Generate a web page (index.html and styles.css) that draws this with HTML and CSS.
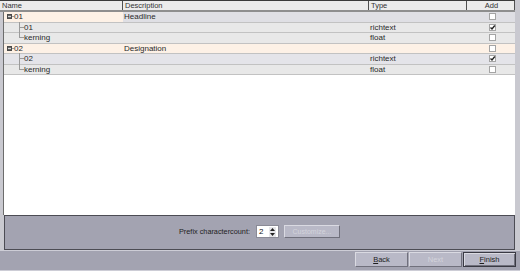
FILE: index.html
```html
<!DOCTYPE html>
<html lang="en">
<head>
    <meta charset="UTF-8">
    <title>Export fields</title>
    <link rel="stylesheet" href="styles.css">
</head>
<body>

<div class="window">
    <div class="content">
        <div class="grid-head">
            <div class="hcell">Name</div>
            <div class="hcell">Description</div>
            <div class="hcell">Type</div>
            <div class="hcell center">Add</div>
        </div>

        <div class="grid-body">
            <div class="row row-parent">
                <div class="cell name hot"><span class="expander"></span><span class="stub"></span>01</div>
                <div class="cell">Headline</div>
                <div class="cell"></div>
                <div class="cell center"><span class="check"></span></div>
            </div>
            <div class="row">
                <div class="cell name"><span class="branch"><span class="top"></span><span class="bottom"></span></span>01</div>
                <div class="cell"></div>
                <div class="cell">richtext</div>
                <div class="cell center"><span class="check checked"><svg width="7" height="7" viewBox="0 0 7 7"><polyline points="1.5,3.5 3,5 5.8,1.5" fill="none" stroke="#222" stroke-width="1.4"/></svg></span></div>
            </div>
            <div class="row">
                <div class="cell name"><span class="branch last"><span class="top"></span><span class="bottom"></span></span>kerning</div>
                <div class="cell"></div>
                <div class="cell">float</div>
                <div class="cell center"><span class="check"></span></div>
            </div>
            <div class="row row-hot">
                <div class="cell name"><span class="expander"></span><span class="stub"></span>02</div>
                <div class="cell">Designation</div>
                <div class="cell"></div>
                <div class="cell center"><span class="check"></span></div>
            </div>
            <div class="row row-alt">
                <div class="cell name"><span class="branch"><span class="top"></span><span class="bottom"></span></span>02</div>
                <div class="cell"></div>
                <div class="cell">richtext</div>
                <div class="cell center"><span class="check checked"><svg width="7" height="7" viewBox="0 0 7 7"><polyline points="1.5,3.5 3,5 5.8,1.5" fill="none" stroke="#222" stroke-width="1.4"/></svg></span></div>
            </div>
            <div class="row">
                <div class="cell name"><span class="branch last"><span class="top"></span><span class="bottom"></span></span>kerning</div>
                <div class="cell"></div>
                <div class="cell">float</div>
                <div class="cell center"><span class="check"></span></div>
            </div>
        </div>

        <div class="options">
            <span class="label">Prefix charactercount:</span>
            <div class="spinner">
                <span class="value">2</span>
                <span class="arrows">
                    <svg width="5" height="3" viewBox="0 0 5 3"><polygon points="0,3 2.5,0 5,3" fill="#222"/></svg>
                    <svg width="5" height="3" viewBox="0 0 5 3"><polygon points="0,0 5,0 2.5,3" fill="#222"/></svg>
                </span>
            </div>
            <button class="btn small" disabled>Customize...</button>
        </div>
    </div>

    <div class="button-bar">
        <button class="btn"><u>B</u>ack</button>
        <button class="btn" disabled>Next</button>
        <button class="btn default"><u>F</u>inish</button>
    </div>
</div>

</body>
</html>
```

FILE: styles.css
```css
* {
    margin: 0;
    padding: 0;
    box-sizing: border-box;
    font-family: "Liberation Sans", Arial, sans-serif;
}
body {
    width: 520px;
    height: 271px;
    background: #c9c9d0;
    font-size: 8px;
    color: #2a2a2a;
    overflow: hidden;
}
.window {
    display: flex;
    flex-direction: column;
    height: 271px;
}
.content {
    flex: 1;
    display: flex;
    flex-direction: column;
    padding-right: 5px;
}

/* header of the field list */
.grid-head {
    display: grid;
    grid-template-columns: 123px 246px 98px 48px;
    height: 12px;
    background: #ececec;
    border-top: 1px solid #3c3c3c;
    border-bottom: 2px solid #8e8e8e;
}
.hcell {
    border-right: 1px solid #505050;
    padding-left: 2px;
    line-height: 9px;
    font-size: 7.5px;
    color: #333;
}
.center {
    text-align: center;
    justify-content: center;
}

/* rows */
.grid-body {
    flex: 1;
    margin-left: 3px;
    border-left: 1px solid #6c6c6c;
    background: #fff;
}
.row {
    display: grid;
    grid-template-columns: 119px 246px 98px 48px;
    height: 10.5px;
    background: #e8e8e8;
    border-bottom: 1px solid #c2c2c2;
}
.row-parent {
    background: #dfdfe4;
}
.row-alt {
    background: #e4e4e9;
}
.row-hot,
.cell.hot {
    background: #fdf1e6;
}
.cell {
    display: flex;
    align-items: center;
    padding-left: 1px;
    line-height: 9.5px;
    white-space: nowrap;
}
.cell.name {
    padding-left: 3px;
    align-items: stretch;
}
.cell.name {
    line-height: 9.5px;
}
.expander {
    width: 5px;
    height: 5px;
    margin-top: 2px;
    background: #6a6a6a;
    border: 1px solid #4a4a4a;
    display: flex;
    align-items: center;
}
.expander::before {
    content: "";
    display: block;
    width: 3px;
    height: 1px;
    background: #d8d8d8;
}
.stub {
    width: 2px;
    height: 5px;
    border-bottom: 1px solid #9a9a9a;
    margin-right: 0;
}

/* tree branches of child rows */
.branch {
    display: flex;
    flex-direction: column;
    width: 5px;
    margin-left: 12px;
    margin-right: 0;
    margin-top: -1px;
    margin-bottom: -1px;
}
.branch .top {
    height: 6px;
    border-left: 1px solid #9a9a9a;
    border-bottom: 1px solid #9a9a9a;
}
.branch .bottom {
    flex: 1;
    border-left: 1px solid #9a9a9a;
}
.branch.last .bottom {
    border-left: none;
}

.check {
    display: inline-block;
    width: 7px;
    height: 7px;
    background: #fff;
    border: 1px solid #a4a4a4;
    margin-left: 2px;
}
.check svg {
    display: block;
    margin: -1px;
}

/* options panel */
.options {
    height: 35px;
    margin-left: 4px;
    border: 1px solid #4c4c54;
    background: #a3a3b1;
    display: flex;
    align-items: center;
    justify-content: center;
    gap: 5px;
    padding-bottom: 2px;
}
.label {
    font-size: 7.3px;
    color: #1e1e1e;
    margin-right: 1px;
}
.spinner {
    width: 23px;
    height: 13px;
    background: #fff;
    border: 1px solid #8a8a96;
    display: flex;
    align-items: center;
    justify-content: space-between;
    padding: 0 2px 0 2px;
}
.spinner .value {
    font-size: 8px;
    color: #111;
}
.spinner .arrows {
    display: flex;
    flex-direction: column;
    gap: 2px;
    background: #e6e6ea;
    padding: 1px 1px;
}
.spinner svg {
    display: block;
}

/* buttons */
.btn {
    height: 15px;
    background: #b9b9c7;
    border: 1px solid;
    border-color: #dadae2 #70707c #70707c #dadae2;
    font-size: 7.5px;
    color: #1e1e1e;
    width: 53px;
    cursor: pointer;
}
.btn:disabled {
    color: #d4d4dc;
}
.btn.small {
    width: 56px;
    height: 13px;
    font-size: 7px;
}
.btn.default {
    border: 1px solid #3a3a44;
    box-shadow: inset 1px 1px 0 #dadae2, inset -1px -1px 0 #70707c;
}
.button-bar {
    height: 21px;
    background: #a3a3b1;
    border-top: 1px solid #cdcdd6;
    border-bottom: 1px solid #cdcdd6;
    display: flex;
    justify-content: flex-end;
    align-items: flex-start;
    gap: 1px;
    padding: 1px 4px 0 0;
}
```
